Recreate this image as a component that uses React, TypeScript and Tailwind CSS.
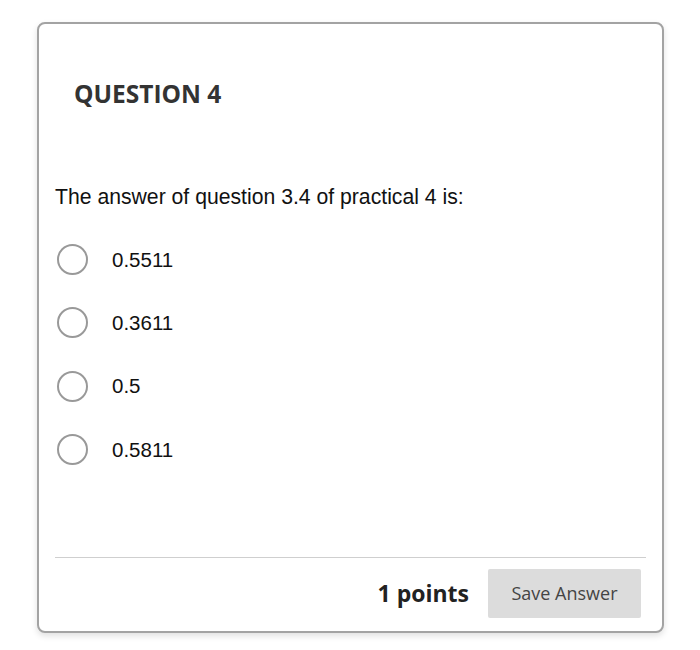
const options = ['0.5511', '0.3611', '0.5', '0.5811']

export default function App() {
  return (
    <div className="w-[700px] h-[650px] bg-white pt-[22px] pl-[37px]">
      <div className="w-[627px] h-[611px] flex flex-col rounded-[8px] border-2 border-[#a3a3a3] bg-white shadow-[0_3px_6px_rgba(0,0,0,0.12)]">
        {/* Header */}
        <h2 className="pl-[35px] pt-[54px] text-[24.5px] leading-[32px] font-bold text-[#333] font-['Open_Sans',sans-serif]">
          QUESTION 4
        </h2>

        {/* Question */}
        <div className="pl-[16px] mt-[75px] font-['Liberation_Sans',Arial,sans-serif] text-[21.2px] leading-[24px] text-[#111]">
          The answer of question 3.4 of practical 4 is:
        </div>

        <div className="mt-[19px] pl-[18px] flex flex-col">
          {options.map((opt) => (
            <label key={opt} className="h-[63.3px] flex items-center cursor-pointer">
              <span className="w-[31px] h-[31px] rounded-full border-[2.5px] border-[#999] bg-white flex-shrink-0" />
              <span className="ml-[24px] font-['Liberation_Sans',Arial,sans-serif] text-[20.5px] leading-[24px] text-[#111]">
                {opt}
              </span>
            </label>
          ))}
        </div>

        <div className="flex-1" />

        {/* Footer */}
        <div className="mx-[16px] border-t border-[#cfcfcf]" />
        <div className="flex items-center justify-end pt-[11px] pb-[13px] pr-[21px] font-['Open_Sans',sans-serif]">
          <span className="text-[23px] font-bold text-[#222] mr-[19px]">1 points</span>
          <button className="w-[153px] h-[49px] rounded-[2px] bg-[#dcdcdc] text-[18px] text-[#444]">
            Save Answer
          </button>
        </div>
      </div>
    </div>
  )
}
